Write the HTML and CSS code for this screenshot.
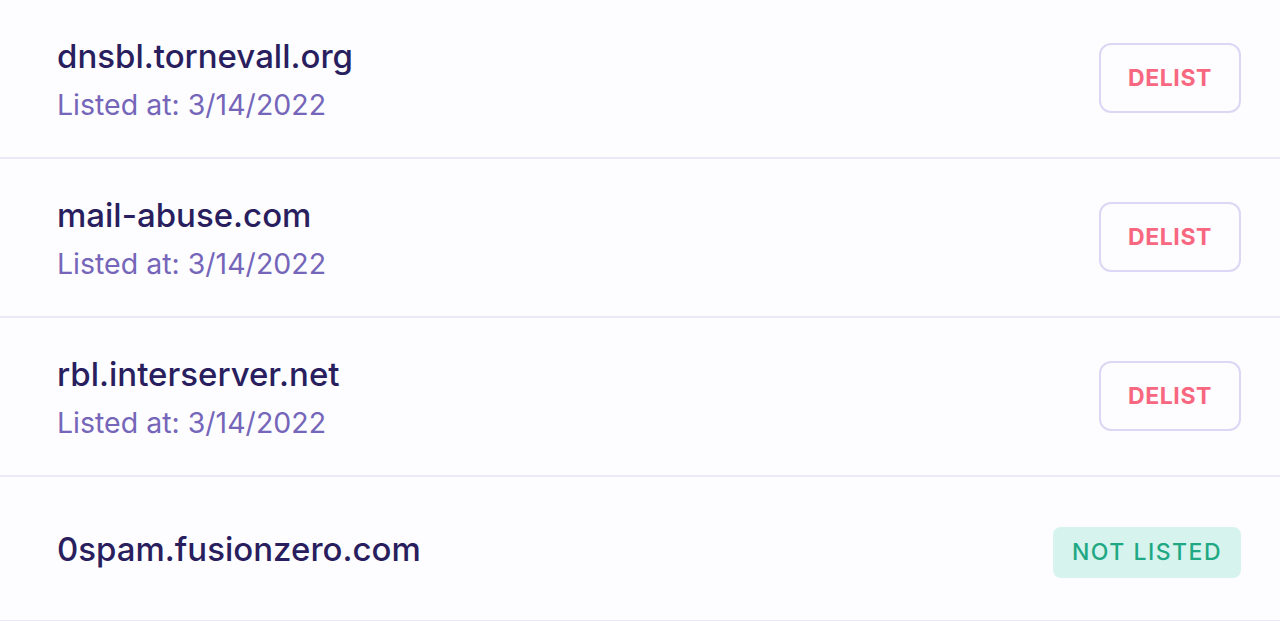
FILE: index.html
```
<!DOCTYPE html>
<html lang="en">
<head>
    <meta charset="UTF-8">
    <title>Blacklist status</title>
    <link rel="stylesheet" href="styles.css">
</head>
<body>
    <ul class="bl-list">
        <li class="bl-row">
            <div class="bl-info">
                <div class="bl-name">dnsbl.tornevall.org</div>
                <div class="bl-date">Listed at: 3/14/2022</div>
            </div>
            <button class="delist-btn">Delist</button>
        </li>
        <li class="bl-row">
            <div class="bl-info">
                <div class="bl-name">mail-abuse.com</div>
                <div class="bl-date">Listed at: 3/14/2022</div>
            </div>
            <button class="delist-btn">Delist</button>
        </li>
        <li class="bl-row">
            <div class="bl-info">
                <div class="bl-name">rbl.interserver.net</div>
                <div class="bl-date">Listed at: 3/14/2022</div>
            </div>
            <button class="delist-btn">Delist</button>
        </li>
        <li class="bl-row clean">
            <div class="bl-info">
                <div class="bl-name">0spam.fusionzero.com</div>
            </div>
            <span class="status-badge">Not listed</span>
        </li>
    </ul>
</body>
</html>
```

FILE: styles.css
```
body {
    margin: 0;
    padding: 0;
    background-color: #fdfdff;
    font-family: Inter, 'Noto Sans', sans-serif;
}

.bl-list {
    list-style: none;
    margin: 0;
    padding: 0;
}

.bl-row {
    display: flex;
    align-items: center;
    justify-content: space-between;
    min-height: 86px;
    padding: 36px 39px 35px 57px;
    border-bottom: 2px solid #ebe8f8;
}

.bl-row.clean {
    min-height: 72px;
}

.bl-name {
    font-size: 33px;
    line-height: 40px;
    font-weight: 500;
    color: #291e5e;
}

.bl-date {
    margin-top: 11px;
    font-size: 28.5px;
    line-height: 35px;
    color: #7566b9;
}

.delist-btn {
    width: 142px;
    height: 70px;
    margin-top: -2px;
    background-color: #fdfcff;
    border: 2px solid #dcd7f4;
    border-radius: 12px;
    color: #f7677f;
    font-family: inherit;
    font-size: 23px;
    font-weight: 700;
    letter-spacing: 0.6px;
    text-transform: uppercase;
    cursor: pointer;
}

.status-badge {
    display: inline-block;
    margin-top: 6px;
    padding: 0 19px;
    height: 51px;
    line-height: 51px;
    background-color: #d6f4ed;
    border-radius: 8px;
    color: #1fa883;
    font-size: 23px;
    font-weight: 500;
    letter-spacing: 1.5px;
    text-transform: uppercase;
}
```
